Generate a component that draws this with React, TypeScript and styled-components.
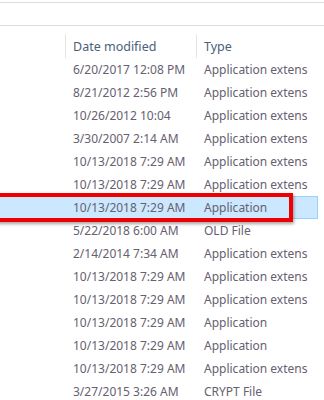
import styled, { createGlobalStyle } from "styled-components";

const GlobalStyle = createGlobalStyle`
  html, body {
    margin: 0;
    padding: 0;
    background: #ffffff;
  }
  body {
    font-family: "Noto Sans", "Open Sans", sans-serif;
    overflow: hidden;
  }
`;

const Window = styled.div`
  width: 324px;
  height: 400px;
  background: #ffffff;
  overflow: hidden;
  position: relative;
`;

const AddressBar = styled.div`
  margin-top: 2px;
  height: 22px;
  border-top: 1px solid #dcdcdc;
  border-bottom: 1px solid #dcdcdc;
`;

const Header = styled.div`
  display: grid;
  grid-template-columns: 65px 131px 1fr;
  padding-top: 8px;
  height: 24px;
`;

const HeaderCell = styled.div<{ $divider?: boolean }>`
  border-left: ${(p) => (p.$divider ? "1px solid #e5e5e5" : "none")};
  padding-left: 7px;
  padding-top: 2px;
  color: #4c607a;
  font-size: 12.5px;
  line-height: 22px;
  white-space: nowrap;
`;

const List = styled.div`
  display: flex;
  flex-direction: column;
`;

const Row = styled.div<{ $selected?: boolean }>`
  display: grid;
  grid-template-columns: 65px 131px 1fr;
  height: 23px;
  width: 318px;
  box-sizing: border-box;
  background: ${(p) => (p.$selected ? "#cce8ff" : "transparent")};
  border: 1px solid ${(p) => (p.$selected ? "#99d1ff" : "transparent")};
  border-left: none;
  position: relative;
`;

const Cell = styled.div`
  padding-left: 8px;
  color: #666070;
  font-size: 12px;
  line-height: 21px;
  white-space: nowrap;
  overflow: hidden;
`;

const Highlight = styled.div`
  position: absolute;
  left: -10px;
  top: -4px;
  width: 303px;
  height: 29px;
  box-sizing: border-box;
  border: 4px solid #f00000;
  box-shadow: 1px 2px 3px rgba(0, 0, 0, 0.35);
  pointer-events: none;
`;

const rows: [string, string][] = [
  ["6/20/2017 12:08 PM", "Application extens"],
  ["8/21/2012 2:56 PM", "Application extens"],
  ["10/26/2012 10:04", "Application extens"],
  ["3/30/2007 2:14 AM", "Application extens"],
  ["10/13/2018 7:29 AM", "Application extens"],
  ["10/13/2018 7:29 AM", "Application extens"],
  ["10/13/2018 7:29 AM", "Application"],
  ["5/22/2018 6:00 AM", "OLD File"],
  ["2/14/2014 7:34 AM", "Application extens"],
  ["10/13/2018 7:29 AM", "Application extens"],
  ["10/13/2018 7:29 AM", "Application extens"],
  ["10/13/2018 7:29 AM", "Application"],
  ["10/13/2018 7:29 AM", "Application"],
  ["10/13/2018 7:29 AM", "Application extens"],
  ["3/27/2015 3:26 AM", "CRYPT File"],
];

export default function App() {
  return (
    <Window>
      <GlobalStyle />
      <AddressBar />
      <Header>
        <HeaderCell />
        <HeaderCell $divider>Date modified</HeaderCell>
        <HeaderCell $divider>Type</HeaderCell>
      </Header>
      <List>
        {rows.map(([date, type], i) => (
          <Row key={i} $selected={i === 6}>
            <Cell />
            <Cell>{date}</Cell>
            <Cell>{type}</Cell>
            {i === 6 && <Highlight />}
          </Row>
        ))}
      </List>
    </Window>
  );
}
